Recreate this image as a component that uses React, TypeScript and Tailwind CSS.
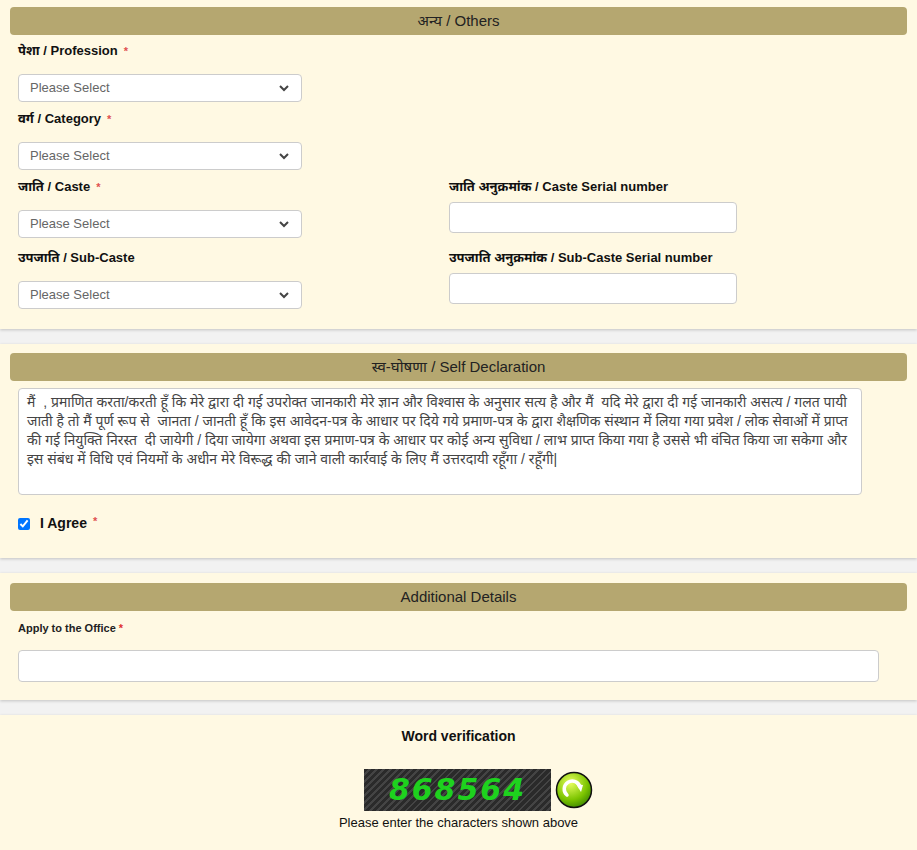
const font = { fontFamily: '"Liberation Sans", "Noto Sans", Arial, sans-serif' };

function Header({ children }: { children: React.ReactNode }) {
  return (
    <div className="mx-[10px] h-[28px] rounded-[4px] bg-[#b5a770] flex items-center justify-center text-[15px] text-[#222]">
      {children}
    </div>
  );
}

function Star() {
  return <span className="text-[#e05050] text-[11px] align-top ml-[6px]">*</span>;
}

function Select() {
  return (
    <div className="w-[284px] h-[28px] bg-white border border-[#ccc] rounded-[4px] flex items-center justify-between px-[11px] text-[13px] text-[#666]">
      <span>Please Select</span>
      <svg width="12" height="12" viewBox="0 0 12 12" fill="none" stroke="#444" strokeWidth="2">
        <path d="M2 4l4 4 4-4" />
      </svg>
    </div>
  );
}

function Field({ label, star, children }: { label: string; star?: boolean; children: React.ReactNode }) {
  return (
    <div>
      <div className="text-[13px] font-bold text-[#111] h-[31px] leading-[16px]">
        {label}
        {star && <Star />}
      </div>
      {children}
    </div>
  );
}

function Input({ w }: { w: string }) {
  return <div className={`${w} h-[31px] -mt-[8px] bg-white border border-[#ccc] rounded-[4px]`} />;
}

export default function App() {
  return (
    <div className="bg-[#f2f2f2] min-h-[850px] flex flex-col gap-[15px]" style={font}>
      <div className="bg-[#fff9e3] pt-[7px] pb-[20px] shadow-[0_1px_3px_rgba(0,0,0,0.2)]">
        <Header>अन्य / Others</Header>
        <div className="px-[18px] pt-[8px] flex flex-col gap-[9px]">
          <Field label="पेशा / Profession" star><Select /></Field>
          <Field label="वर्ग / Category" star><Select /></Field>
          <div className="grid grid-cols-[431px_1fr]">
            <Field label="जाति / Caste" star><Select /></Field>
            <Field label="जाति अनुक्रमांक / Caste Serial number"><Input w="w-[288px]" /></Field>
          </div>
          <div className="grid grid-cols-[431px_1fr] mt-[3px]">
            <Field label="उपजाति / Sub-Caste"><Select /></Field>
            <Field label="उपजाति अनुक्रमांक / Sub-Caste Serial number"><Input w="w-[288px]" /></Field>
          </div>
        </div>
      </div>

      <div className="bg-[#fff9e3] pt-[9px] pb-[24px] shadow-[0_1px_3px_rgba(0,0,0,0.2)]">
        <Header>स्व-घोषणा / Self Declaration</Header>
        <div className="px-[18px] pt-[7px]">
          <div className="w-[844px] h-[107px] bg-white border border-[#ccc] rounded-[4px] px-[8px] py-[4px] text-[14px] leading-[19px] text-[#444]">
            मैं &nbsp;, प्रमाणित करता/करती हूँ कि मेरे द्वारा दी गई उपरोक्त जानकारी मेरे ज्ञान और विश्वास के अनुसार सत्य है और मैं &nbsp;यदि मेरे द्वारा दी गई जानकारी असत्य / गलत पायी जाती है तो मैं पूर्ण रूप से &nbsp;जानता / जानती हूँ कि इस आवेदन-पत्र के आधार पर दिये गये प्रमाण-पत्र के द्वारा शैक्षणिक संस्थान में लिया गया प्रवेश / लोक सेवाओं में प्राप्त की गई नियुक्ति निरस्त &nbsp;दी जायेगी / दिया जायेगा अथवा इस प्रमाण-पत्र के आधार पर कोई अन्य सुविधा / लाभ प्राप्त किया गया है उससे भी वंचित किया जा सकेगा और इस संबंध में विधि एवं नियमों के अधीन मेरे विरूद्ध की जाने वाली कार्रवाई के लिए मैं उत्तरदायी रहूँगा / रहूँगी|
          </div>
          <div className="flex items-center mt-[18px] gap-[10px]">
            <input type="checkbox" defaultChecked className="w-[12px] h-[12px] accent-[#0075ff]" />
            <span className="text-[14px] font-bold text-[#111]">I Agree<Star /></span>
          </div>
        </div>
      </div>

      <div className="bg-[#fff9e3] pt-[10px] pb-[18px] shadow-[0_1px_3px_rgba(0,0,0,0.2)]">
        <Header>Additional Details</Header>
        <div className="px-[18px] pt-[9px]">
          <div className="text-[11px] font-bold text-[#222]">Apply to the Office <span className="text-[#e03030]">*</span></div>
          <div className="mt-[13px] w-[861px] h-[32px] bg-white border border-[#ccc] rounded-[4px]" />
        </div>
      </div>

      <div className="bg-[#fff9e3] pt-[11px] flex-1 shadow-[0_1px_3px_rgba(0,0,0,0.2)] flex flex-col items-center">
        <div className="text-[14px] font-bold text-[#111]">Word verification</div>
        <div className="mt-[22px] flex items-center gap-[4px] ml-[40px]">
          <div className="w-[187px] h-[42px] flex items-center justify-center bg-[repeating-linear-gradient(135deg,#2a2a2a_0px,#2a2a2a_3px,#444_3px,#444_5px)]">
            <span className="text-[#1ed21e] text-[30px] font-bold italic tracking-[2px]" style={{ fontFamily: '"DejaVu Sans", sans-serif' }}>868564</span>
          </div>
          <svg width="38" height="38" viewBox="0 0 38 38">
            <defs>
              <radialGradient id="g" cx="0.4" cy="0.3" r="0.8">
                <stop offset="0" stopColor="#e8ff60" />
                <stop offset="0.6" stopColor="#7cc400" />
                <stop offset="1" stopColor="#2f7a00" />
              </radialGradient>
            </defs>
            <circle cx="19" cy="19" r="17.5" fill="url(#g)" stroke="#111" strokeWidth="1.5" />
            <path d="M12 24a8 8 0 1 1 13-8" fill="none" stroke="#fff" strokeWidth="3.5" strokeLinecap="round" />
            <path d="M21 13l7 1-2 7z" fill="#fff" />
          </svg>
        </div>
        <div className="text-[13px] text-[#111] mt-[2px]">Please enter the characters shown above</div>
        <div className="mt-[22px] w-[130px] h-[10px] bg-white border border-[#ccc] rounded-t-[4px]" />
      </div>
    </div>
  );
}
